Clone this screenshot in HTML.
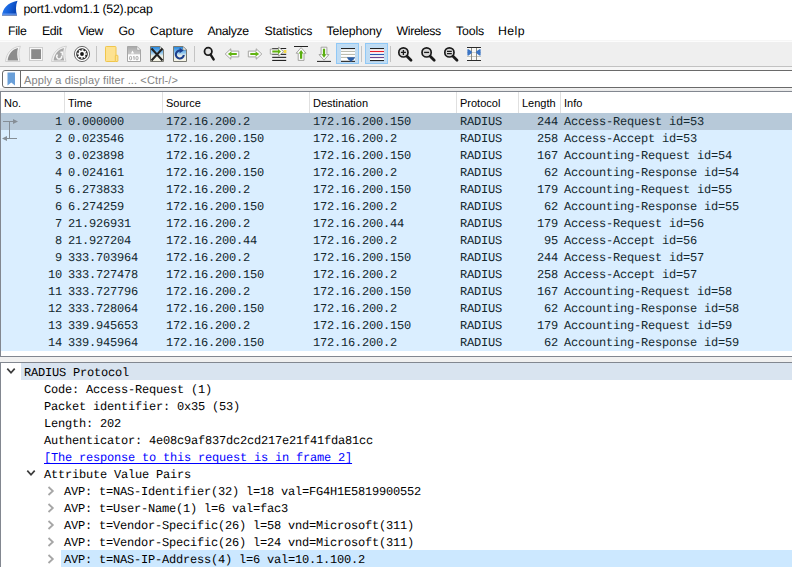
<!DOCTYPE html>
<html><head><meta charset="utf-8">
<style>
*{box-sizing:border-box;margin:0;padding:0}
html,body{width:792px;height:567px;overflow:hidden;background:#fff}
body{font-family:"Liberation Sans",sans-serif;font-size:12px;color:#000;position:relative}
.abs{position:absolute}
#title{left:0;top:0;width:792px;height:19px;background:#fff}
#title span{position:absolute;left:23.4px;top:2px;font-size:12.3px;letter-spacing:-0.21px;text-rendering:geometricPrecision;line-height:14px;white-space:nowrap}
#menu{left:0;top:19px;width:792px;height:23px;background:#fff}
#menu span{position:absolute;top:5px;font-size:12.3px;letter-spacing:-0.35px;text-rendering:geometricPrecision;line-height:14px;white-space:nowrap}
#tool{left:0;top:40px;width:792px;height:27px;background:#efefef;border-top:1px solid #f6f6f6;border-bottom:1px solid #c2c2c2;box-shadow:inset 0 1px 0 #fcfcfc}
#fwrap{left:0;top:67px;width:792px;height:24px;background:linear-gradient(#f6f6f6 0,#f6f6f6 3px,#fff 3px,#fff 21px,#f2f2f2 21px,#e8e8e8 24px)}
#filter{left:2px;top:70px;width:800px;height:18px;background:#fff;border:1px solid #6a6a6a;border-radius:3px}
#filter .bm{position:absolute;left:0;top:0;width:18px;height:16px;border-right:1px solid #6a6a6a}
#filter .ph{position:absolute;left:21px;top:2px;font-size:11px;letter-spacing:0.12px;line-height:14px;color:#848484;white-space:nowrap}
#plist{left:0;top:91px;width:792px;height:266px;background:#fff;border-left:1px solid #828790;border-top:1px solid #828790;border-bottom:1px solid #828790}
#phead{position:absolute;left:0;top:0;width:791px;height:21px;background:#fff}
#phead span{position:absolute;top:4px;font-size:11px;line-height:14px;white-space:nowrap}
#phead i{position:absolute;top:0;width:1px;height:21px;background:#e0e0e0}
.row{position:absolute;left:0;width:791px;height:17px;background:#daeeff;font-family:"Liberation Mono",monospace;font-size:12px;letter-spacing:-0.2px;text-rendering:geometricPrecision;line-height:17px;padding-top:0;white-space:pre;color:#12272e}
.row.sel{background:#b7c9d9}
.row span{position:absolute;top:1px}
.c1{left:0;width:61px;text-align:right}
.c2{left:67px}.c3{left:165px}.c4{left:312px}.c5{left:459px}
.c6{left:501px;width:56px;text-align:right}.c7{left:563px}
#split{left:0;top:357px;width:792px;height:5px;background:#f0f0f0}
#detail{left:0;top:362px;width:792px;height:210px;background:#fff;border-left:1px solid #828790;border-top:1px solid #828790}
.d{position:absolute;left:0;width:791px;height:17px;font-family:"Liberation Mono",monospace;font-size:12px;letter-spacing:-0.2px;text-rendering:geometricPrecision;line-height:17px;white-space:pre;color:#000}
.d span{position:absolute;top:2px}
.hl{position:absolute;top:0;height:17px;right:0}
</style></head><body>
<div id="title" class="abs"><svg class="abs" style="left:0;top:0" width="20" height="18" viewBox="0 0 20 18"><defs><linearGradient id="fb" x1="0" y1="0" x2="1" y2="0.35"><stop offset="0" stop-color="#3585f4"/><stop offset="0.55" stop-color="#1662dc"/><stop offset="1" stop-color="#0844b4"/></linearGradient><clipPath id="fc"><path d="M2 15.7 C2.6 9 7 2.8 17.5 0.8 C15.6 5.5 15.6 10.5 17 15.7 Z"/></clipPath></defs><path d="M2 15.7 C2.6 9 7 2.8 17.5 0.8 C15.6 5.5 15.6 10.5 17 15.7 Z" fill="url(#fb)"/><g clip-path="url(#fc)"><rect x="0" y="13.4" width="20" height="1.6" fill="#6f9eec" opacity="0.75"/><rect x="0" y="15" width="20" height="1" fill="#8a96b4"/></g></svg><span>port1.vdom1.1 (52).pcap</span></div>
<div id="menu" class="abs">
<span style="left:8px">File</span><span style="left:42px">Edit</span><span style="left:78px">View</span><span style="left:118.5px">Go</span><span style="left:150px;letter-spacing:-0.05px">Capture</span><span style="left:207.5px">Analyze</span><span style="left:264.5px;letter-spacing:-0.15px">Statistics</span><span style="left:326.5px;letter-spacing:-0.07px">Telephony</span><span style="left:396.5px">Wireless</span><span style="left:456px;letter-spacing:-0.15px">Tools</span><span style="left:498px;letter-spacing:0.4px">Help</span>
</div>
<div id="tool" class="abs"></div>
<div id="fwrap" class="abs"></div>
<!--TOOLSVG-->
<svg class="abs" style="left:0;top:42px" width="792" height="24" viewBox="0 42 792 24">
<defs>
<linearGradient id="gb" x1="0" y1="0" x2="0" y2="1"><stop offset="0" stop-color="#1f84de"/><stop offset="0.42" stop-color="#8fc6f0"/><stop offset="0.62" stop-color="#eef0e6"/><stop offset="1" stop-color="#f6f4e6"/></linearGradient>
<linearGradient id="gg" x1="0" y1="0" x2="0" y2="1"><stop offset="0" stop-color="#a8a8a8"/><stop offset="0.5" stop-color="#c8c8c8"/><stop offset="0.55" stop-color="#ffffff"/><stop offset="1" stop-color="#ffffff"/></linearGradient>
</defs>
<!-- start fin (disabled) -->
<path d="M5.5 61.5 C6.3 53 12 46.8 20.4 46.2 C18.4 51 18.4 56 20 61.5 Z" fill="#f6f6f6" stroke="#cdcdcd" stroke-width="0.9"/>
<path d="M7.6 60.4 C8.4 54 12.3 49.3 18 48 C16.9 52 17 56.5 18.2 60.4 Z" fill="#8c8c8c"/>
<!-- stop -->
<rect x="29.5" y="47.5" width="13" height="13" fill="#f8f8f8" stroke="#cdcdcd" stroke-width="1"/>
<rect x="31.2" y="49.2" width="9.8" height="9.8" fill="#8a8a8a"/>
<!-- restart fin (disabled) -->
<path d="M51.5 61.5 C52.3 53 58 46.8 66.4 46.2 C64.4 51 64.4 56 66 61.5 Z" fill="#f2f2f2" stroke="#cdcdcd" stroke-width="0.9"/>
<path d="M53.6 60.4 C54.4 54 58.3 49.3 64 48 C62.9 52 63 56.5 64.2 60.4 Z" fill="#a8a8a8"/>
<path d="M57.6 54.6 A2.5 2.5 0 1 0 61.6 55.8" fill="none" stroke="#f6f6f6" stroke-width="1.5"/>
<path d="M60.4 51.4 H63 V55.4 H61.6 V53 H60.4 Z" fill="#f6f6f6"/>
<!-- options gear -->
<circle cx="82" cy="54" r="7.6" fill="#fff" stroke="#4a4a4a" stroke-width="0.8"/>
<circle cx="82" cy="54" r="5.8" fill="#262626"/>
<circle cx="82" cy="54" r="4" fill="none" stroke="#fff" stroke-width="1.5" stroke-dasharray="1.7 1.4416" transform="rotate(-11 82 54)"/>
<circle cx="82" cy="54" r="3.5" fill="#fff"/>
<circle cx="82" cy="54" r="1.9" fill="#161616"/>
<!-- sep -->
<rect x="96" y="46" width="1" height="16" fill="#c4c4c4"/>
<!-- open folder -->
<rect x="105.5" y="46.5" width="10.5" height="15" rx="0.8" fill="#fde291" stroke="#f0c64c" stroke-width="1"/>
<rect x="115.3" y="55.3" width="2.6" height="6.2" rx="0.6" fill="#fde291" stroke="#f0c64c" stroke-width="1"/>
<!-- save -->
<path d="M127.5 46.5 H137 L140.5 50 V61.5 H127.5 Z" fill="url(#gg)" stroke="#a6a6a6" stroke-width="1"/>
<path d="M137 46.5 V50 H140.5 Z" fill="#fff" stroke="#a6a6a6" stroke-width="0.6"/>
<path d="M131 53.5 L132.5 50.5 L134 53.5 Z" fill="#fff"/>
<rect x="129.6" y="56.4" width="2" height="3.4" rx="0.8" fill="none" stroke="#9c9c9c" stroke-width="0.85"/><path d="M133.1 57.2 L134.1 56.3 V59.9" fill="none" stroke="#9c9c9c" stroke-width="0.9"/><rect x="136" y="56.4" width="2" height="3.4" rx="0.8" fill="none" stroke="#9c9c9c" stroke-width="0.85"/>
<!-- close -->
<path d="M150.5 46.5 H160 L163.5 50 V61.5 H150.5 Z" fill="url(#gb)" stroke="#7a7a72" stroke-width="1"/>
<path d="M160 46.5 V50 H163.5 Z" fill="#fff" stroke="#7a7a72" stroke-width="0.6"/>
<path d="M151.5 48.5 L162.5 60.5 M162.5 48.5 L151.5 60.5" stroke="#222" stroke-width="2" fill="none"/>
<!-- reload -->
<path d="M173.5 46.5 H183 L186.5 50 V61.5 H173.5 Z" fill="url(#gb)" stroke="#7a7a72" stroke-width="1"/>
<path d="M183 46.5 V50 H186.5 Z" fill="#fff" stroke="#7a7a72" stroke-width="0.6"/>
<path d="M183.8 55 A4 4 0 1 1 180.5 50.6" fill="none" stroke="#1d3f8c" stroke-width="2.1"/>
<path d="M179.6 47.8 L183.6 50.6 L179.6 53.2 Z" fill="#1d3f8c"/>
<!-- sep -->
<rect x="194" y="46" width="1" height="16" fill="#c4c4c4"/>
<!--TOOL2-->
<!-- find -->
<circle cx="208.2" cy="51.4" r="3.7" fill="#e4e4e4" stroke="#1a1a1a" stroke-width="1.8"/>
<path d="M210.6 54.6 L213.6 59.4" stroke="#1a1a1a" stroke-width="2.5" stroke-linecap="round"/>
<!-- back -->
<path d="M225.2 54 L230.79999999999998 48.8 V51.1 H238.8 V56.9 H230.79999999999998 V59.2 Z" fill="#fbfbfb" stroke="#9c9c98" stroke-width="0.9" stroke-linejoin="round"/><path d="M227.79999999999998 54 L231.39999999999998 51.4 V53 H236.8 V55 H231.39999999999998 V56.6 Z" fill="#62b412"/>
<!-- forward -->
<path d="M261.8 54 L256.2 48.8 V51.1 H248.3 V56.9 H256.2 V59.2 Z" fill="#fbfbfb" stroke="#9c9c98" stroke-width="0.9" stroke-linejoin="round"/><path d="M259.2 54 L255.6 51.4 V53 H250.3 V55 H255.6 V56.6 Z" fill="#62b412"/>
<!-- goto -->
<rect x="272.2" y="48" width="14" height="1" fill="#222"/>
<rect x="283.6" y="50" width="2.8" height="3" fill="#f6dc48"/>
<rect x="272.2" y="53.8" width="14" height="1.1" fill="#222"/>
<rect x="272.2" y="56.8" width="14" height="1.1" fill="#222"/>
<rect x="272.2" y="59.9" width="14" height="1.1" fill="#222"/>
<path d="M283.6 51.6 L278.6 47.0 V49.1 H270.3 V54.1 H278.6 V56.2 Z" fill="#fbfbfb" stroke="#9c9c98" stroke-width="0.9" stroke-linejoin="round"/><path d="M281.0 51.6 L278.0 49.0 V50.6 H272.3 V52.6 H278.0 V54.2 Z" fill="#62b412"/>
<!-- first -->
<rect x="294" y="46" width="14" height="1" fill="#222"/>
<path d="M301.1 47.6 L306.1 53.2 H304.0 V60.4 H298.20000000000005 V53.2 H296.1 Z" fill="#fbfbfb" stroke="#9c9c98" stroke-width="0.9" stroke-linejoin="round"/><path d="M301.1 50.0 L303.5 53.6 H302.20000000000005 V58.8 H300.0 V53.6 H298.70000000000005 Z" fill="#5aae10"/>
<!-- last -->
<rect x="317" y="60.9" width="14" height="1" fill="#222"/>
<path d="M324 60.2 L329.0 54.6 H326.9 V47.2 H321.1 V54.6 H319.0 Z" fill="#fbfbfb" stroke="#9c9c98" stroke-width="0.9" stroke-linejoin="round"/><path d="M324 57.800000000000004 L326.4 54.2 H325.1 V48.800000000000004 H322.9 V54.2 H321.6 Z" fill="#5aae10"/>
<!-- autoscroll (checked) -->
<rect x="336.5" y="43.5" width="22" height="20" fill="#c0dcf3" stroke="#90c8f6" stroke-width="1"/>
<rect x="341" y="48" width="14" height="13.8" fill="#fff"/>
<rect x="341" y="48" width="14" height="1.1" fill="#222"/>
<rect x="341" y="50.9" width="14" height="1.1" fill="#bcbcb0"/>
<rect x="341" y="53.9" width="14" height="1.1" fill="#bcbcb0"/>
<rect x="341" y="56.9" width="14" height="1.1" fill="#bcbcb0"/>
<rect x="341" y="60.8" width="14" height="1.1" fill="#222"/>
<path d="M347 57.3 H355 C354.6 59.4 353 60.4 352.2 60.6 L351.6 61.6 H350.4 L349.8 60.6 C349 60.4 347.4 59.4 347 57.3 Z" fill="#2c5fa8"/>
<!-- sep -->
<rect x="361" y="46" width="1" height="16" fill="#c4c4c4"/>
<!-- colorize (checked) -->
<rect x="365.5" y="43.5" width="22" height="20" fill="#c0dcf3" stroke="#90c8f6" stroke-width="1"/>
<rect x="370" y="48" width="14" height="13" fill="#fff"/>
<rect x="370" y="48" width="14" height="1.1" fill="#222"/>
<rect x="370" y="50.9" width="14" height="1.2" fill="#e8202c"/>
<rect x="370" y="53.9" width="14" height="1.2" fill="#2c58b0"/>
<rect x="370" y="56.9" width="14" height="1.2" fill="#70448c"/>
<rect x="370" y="60" width="14" height="1.1" fill="#222"/>
<!-- sep -->
<rect x="390" y="46" width="1" height="16" fill="#c4c4c4"/>
<!-- zoom in -->
<circle cx="403.4" cy="52.4" r="4.6" fill="#d8d8d8" stroke="#1a1a1a" stroke-width="1.7"/>
<path d="M400.9 52.4 H405.9 M403.4 49.9 V54.9" stroke="#1a1a1a" stroke-width="1.3"/>
<path d="M407 56.2 L411 60.2" stroke="#1a1a1a" stroke-width="2.8" stroke-linecap="round"/>
<!-- zoom out -->
<circle cx="426.6" cy="52.4" r="4.6" fill="#d8d8d8" stroke="#1a1a1a" stroke-width="1.7"/>
<path d="M424.1 52.4 H429.1" stroke="#1a1a1a" stroke-width="1.3"/>
<path d="M430.2 56.2 L434.2 60.2" stroke="#1a1a1a" stroke-width="2.8" stroke-linecap="round"/>
<!-- zoom reset -->
<circle cx="449.4" cy="52.4" r="4.6" fill="#d8d8d8" stroke="#1a1a1a" stroke-width="1.7"/>
<path d="M447 51.3 H451.8 M447 53.6 H451.8" stroke="#1a1a1a" stroke-width="1.2"/>
<path d="M453 56.2 L457 60.2" stroke="#1a1a1a" stroke-width="2.8" stroke-linecap="round"/>
<!-- resize columns -->
<rect x="467" y="47" width="14" height="14" fill="#f8f8f6"/>
<rect x="467" y="52" width="14" height="1" fill="#d0d0c8"/>
<rect x="467" y="56" width="14" height="1" fill="#c4c4bc"/>
<rect x="471" y="47" width="1" height="14" fill="#8c8c84"/>
<rect x="476" y="47" width="1" height="14" fill="#8c8c84"/>
<rect x="467" y="47" width="14" height="1" fill="#2a2a2a"/>
<rect x="467" y="60" width="14" height="1" fill="#2a2a2a"/>
<path d="M467.4 49.2 H468.6 L471.8 51.6 V53 L468.6 55.4 H467.4 Z" fill="#3a74c4"/>
<path d="M480.6 49.2 H479.4 L476.2 51.6 V53 L479.4 55.4 H480.6 Z" fill="#3a74c4"/>
</svg>
<!--/TOOLSVG-->
<div id="filter" class="abs"><div class="bm"><svg style="position:absolute;left:4px;top:1px" width="9" height="14" viewBox="0 0 9 14"><path d="M0.5 0.5 H8 V13.5 L4.25 10.6 L0.5 13.5 Z" fill="#6a9fd8"/></svg></div><span class="ph">Apply a display filter ... &lt;Ctrl-/&gt;</span></div>
<div id="plist" class="abs">
<div id="phead"><span style="left:3px">No.</span><i style="left:63px"></i><span style="left:67px">Time</span><i style="left:161px"></i><span style="left:165px">Source</span><i style="left:308px"></i><span style="left:312px">Destination</span><i style="left:455px"></i><span style="left:459px">Protocol</span><i style="left:517px"></i><span style="left:521px">Length</span><i style="left:559px"></i><span style="left:563px">Info</span></div>
<!--ROWS-->
<div class="row sel" style="top:21px"><span class="c1">1</span><span class="c2">0.000000</span><span class="c3">172.16.200.2</span><span class="c4">172.16.200.150</span><span class="c5">RADIUS</span><span class="c6">244</span><span class="c7">Access-Request id=53</span></div>
<div class="row" style="top:38px"><span class="c1">2</span><span class="c2">0.023546</span><span class="c3">172.16.200.150</span><span class="c4">172.16.200.2</span><span class="c5">RADIUS</span><span class="c6">258</span><span class="c7">Access-Accept id=53</span></div>
<div class="row" style="top:55px"><span class="c1">3</span><span class="c2">0.023898</span><span class="c3">172.16.200.2</span><span class="c4">172.16.200.150</span><span class="c5">RADIUS</span><span class="c6">167</span><span class="c7">Accounting-Request id=54</span></div>
<div class="row" style="top:72px"><span class="c1">4</span><span class="c2">0.024161</span><span class="c3">172.16.200.150</span><span class="c4">172.16.200.2</span><span class="c5">RADIUS</span><span class="c6">62</span><span class="c7">Accounting-Response id=54</span></div>
<div class="row" style="top:89px"><span class="c1">5</span><span class="c2">6.273833</span><span class="c3">172.16.200.2</span><span class="c4">172.16.200.150</span><span class="c5">RADIUS</span><span class="c6">179</span><span class="c7">Accounting-Request id=55</span></div>
<div class="row" style="top:106px"><span class="c1">6</span><span class="c2">6.274259</span><span class="c3">172.16.200.150</span><span class="c4">172.16.200.2</span><span class="c5">RADIUS</span><span class="c6">62</span><span class="c7">Accounting-Response id=55</span></div>
<div class="row" style="top:123px"><span class="c1">7</span><span class="c2">21.926931</span><span class="c3">172.16.200.2</span><span class="c4">172.16.200.44</span><span class="c5">RADIUS</span><span class="c6">179</span><span class="c7">Access-Request id=56</span></div>
<div class="row" style="top:140px"><span class="c1">8</span><span class="c2">21.927204</span><span class="c3">172.16.200.44</span><span class="c4">172.16.200.2</span><span class="c5">RADIUS</span><span class="c6">95</span><span class="c7">Access-Accept id=56</span></div>
<div class="row" style="top:157px"><span class="c1">9</span><span class="c2">333.703964</span><span class="c3">172.16.200.2</span><span class="c4">172.16.200.150</span><span class="c5">RADIUS</span><span class="c6">244</span><span class="c7">Access-Request id=57</span></div>
<div class="row" style="top:174px"><span class="c1">10</span><span class="c2">333.727478</span><span class="c3">172.16.200.150</span><span class="c4">172.16.200.2</span><span class="c5">RADIUS</span><span class="c6">258</span><span class="c7">Access-Accept id=57</span></div>
<div class="row" style="top:191px"><span class="c1">11</span><span class="c2">333.727796</span><span class="c3">172.16.200.2</span><span class="c4">172.16.200.150</span><span class="c5">RADIUS</span><span class="c6">167</span><span class="c7">Accounting-Request id=58</span></div>
<div class="row" style="top:208px"><span class="c1">12</span><span class="c2">333.728064</span><span class="c3">172.16.200.150</span><span class="c4">172.16.200.2</span><span class="c5">RADIUS</span><span class="c6">62</span><span class="c7">Accounting-Response id=58</span></div>
<div class="row" style="top:225px"><span class="c1">13</span><span class="c2">339.945653</span><span class="c3">172.16.200.2</span><span class="c4">172.16.200.150</span><span class="c5">RADIUS</span><span class="c6">179</span><span class="c7">Accounting-Request id=59</span></div>
<div class="row" style="top:242px"><span class="c1">14</span><span class="c2">339.945964</span><span class="c3">172.16.200.150</span><span class="c4">172.16.200.2</span><span class="c5">RADIUS</span><span class="c6">62</span><span class="c7">Accounting-Response id=59</span></div>
<!--/ROWS-->
</div>
<svg class="abs" style="left:0;top:113px" width="22" height="34" viewBox="0 113 22 34"><path d="M3 121.5 H14 M9.5 121.5 V138.5 M7 138.5 H17" stroke="#868e96" stroke-width="1" fill="none"/><path d="M13 119 L18 121.5 L13 124 Z" fill="#868e96"/><path d="M7 136 L2 138.5 L7 141 Z" fill="#868e96"/></svg>
<div id="split" class="abs"></div>
<div id="detail" class="abs">
<!--DETAIL-->
<div class="d" style="top:0px"><div class="hl" style="left:20px;background:#d9e4f0"></div><svg class="abs" style="left:4.800000000000001px;top:4px" width="10" height="8" viewBox="0 0 10 8"><path d="M1.3 1.6 L5 5.7 L8.7 1.6" fill="none" stroke="#3c3c3c" stroke-width="1.7"/></svg><span style="left:23px">RADIUS Protocol</span></div>
<div class="d" style="top:17px"><span style="left:43px">Code: Access-Request (1)</span></div>
<div class="d" style="top:34px"><span style="left:43px">Packet identifier: 0x35 (53)</span></div>
<div class="d" style="top:51px"><span style="left:43px">Length: 202</span></div>
<div class="d" style="top:68px"><span style="left:43px">Authenticator: 4e08c9af837dc2cd217e21f41fda81cc</span></div>
<div class="d" style="top:85px"><span style="left:43px;color:#0000ff;text-decoration:underline;text-decoration-thickness:1px;text-underline-offset:1.5px">[The response to this request is in frame 2]</span></div>
<div class="d" style="top:102px"><svg class="abs" style="left:24.8px;top:4px" width="10" height="8" viewBox="0 0 10 8"><path d="M1.3 1.6 L5 5.7 L8.7 1.6" fill="none" stroke="#3c3c3c" stroke-width="1.7"/></svg><span style="left:43px">Attribute Value Pairs</span></div>
<div class="d" style="top:119px"><svg class="abs" style="left:45px;top:3.5px" width="9" height="10" viewBox="0 0 9 10"><path d="M2.5 1 L6.8 5 L2.5 9" fill="none" stroke="#a6a6a6" stroke-width="1.8"/></svg><span style="left:63px">AVP: t=NAS-Identifier(32) l=18 val=FG4H1E5819900552</span></div>
<div class="d" style="top:136px"><svg class="abs" style="left:45px;top:3.5px" width="9" height="10" viewBox="0 0 9 10"><path d="M2.5 1 L6.8 5 L2.5 9" fill="none" stroke="#a6a6a6" stroke-width="1.8"/></svg><span style="left:63px">AVP: t=User-Name(1) l=6 val=fac3</span></div>
<div class="d" style="top:153px"><svg class="abs" style="left:45px;top:3.5px" width="9" height="10" viewBox="0 0 9 10"><path d="M2.5 1 L6.8 5 L2.5 9" fill="none" stroke="#a6a6a6" stroke-width="1.8"/></svg><span style="left:63px">AVP: t=Vendor-Specific(26) l=58 vnd=Microsoft(311)</span></div>
<div class="d" style="top:170px"><svg class="abs" style="left:45px;top:3.5px" width="9" height="10" viewBox="0 0 9 10"><path d="M2.5 1 L6.8 5 L2.5 9" fill="none" stroke="#a6a6a6" stroke-width="1.8"/></svg><span style="left:63px">AVP: t=Vendor-Specific(26) l=24 vnd=Microsoft(311)</span></div>
<div class="d" style="top:187px"><div class="hl" style="left:60px;background:#cce8ff"></div><svg class="abs" style="left:45px;top:3.5px" width="9" height="10" viewBox="0 0 9 10"><path d="M2.5 1 L6.8 5 L2.5 9" fill="none" stroke="#a6a6a6" stroke-width="1.8"/></svg><span style="left:63px">AVP: t=NAS-IP-Address(4) l=6 val=10.1.100.2</span></div>
<!--/DETAIL-->
</div>
</body></html>
